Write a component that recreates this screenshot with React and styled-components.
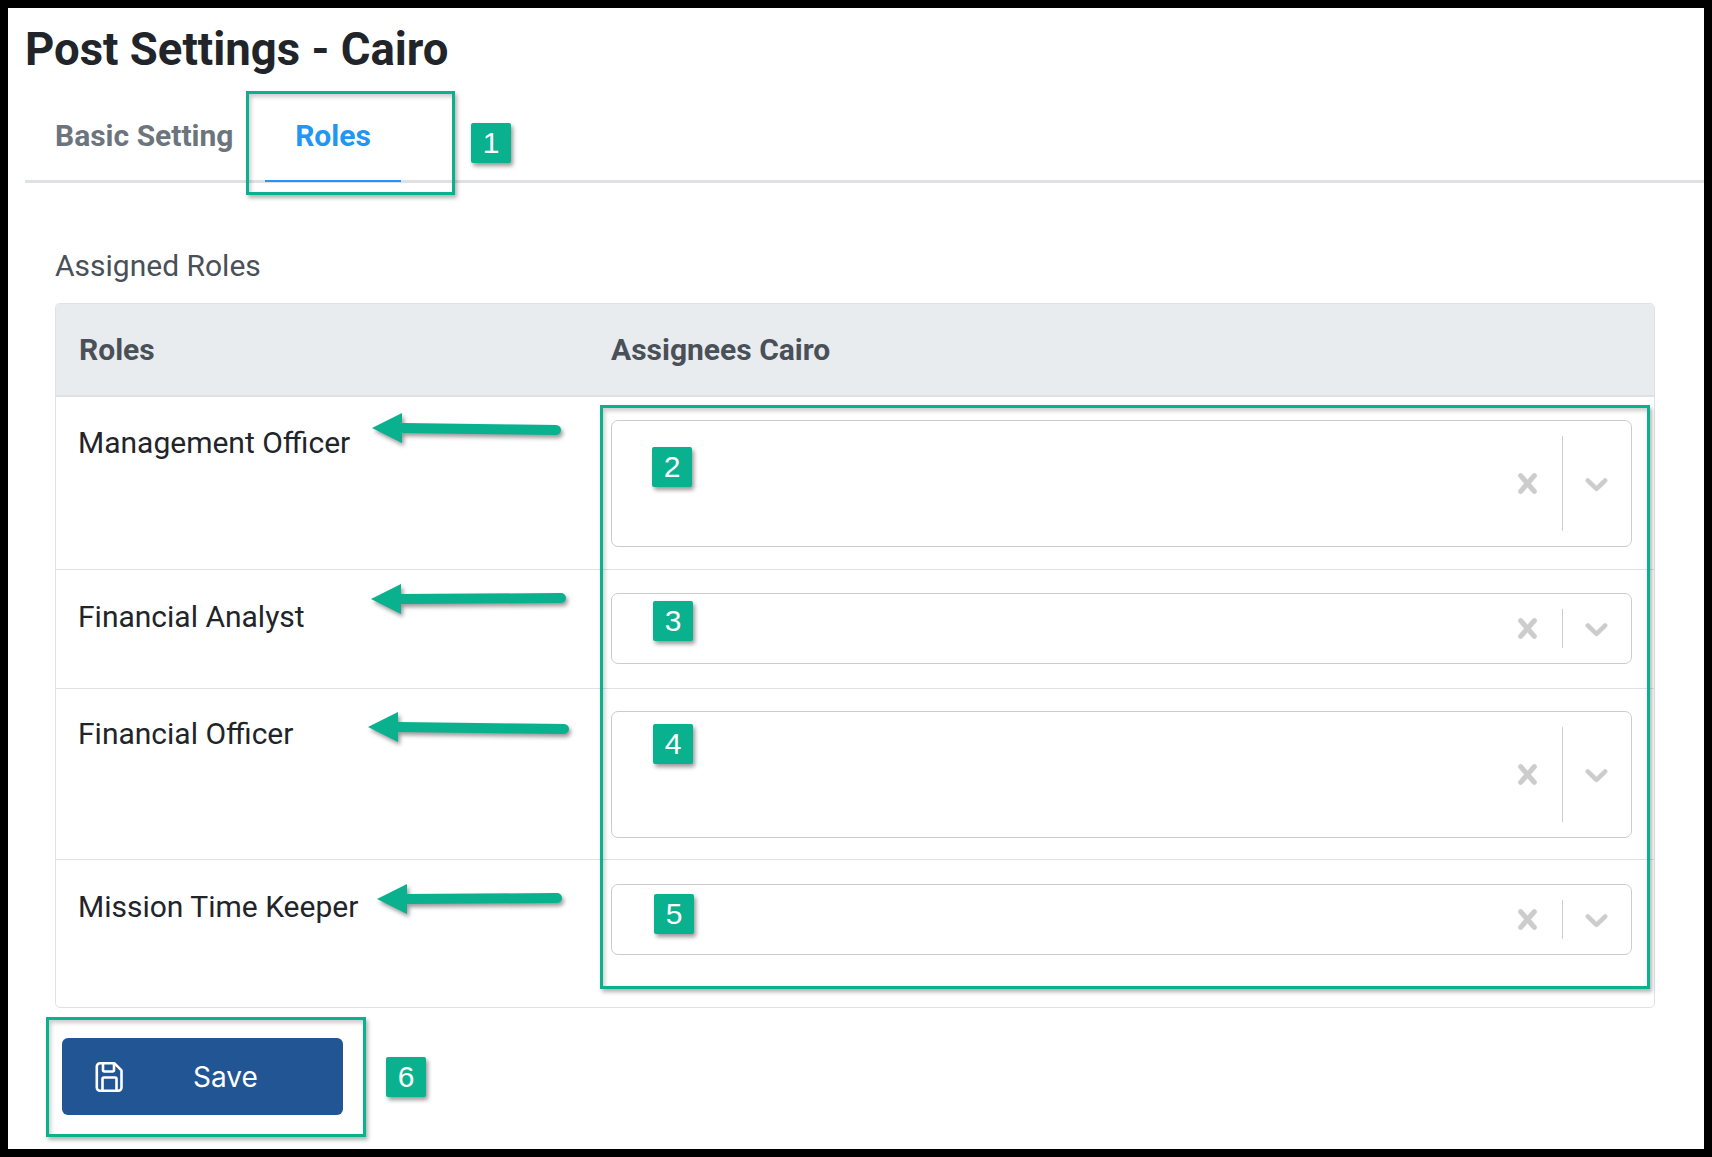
import React from "react";
import styled, { createGlobalStyle } from "styled-components";

const GlobalStyle = createGlobalStyle`
  * {
    box-sizing: border-box;
  }
  html, body {
    margin: 0;
    padding: 0;
    background: #fff;
    font-family: Roboto, "Liberation Sans", sans-serif;
  }
`;

const Frame = styled.div`
  position: relative;
  width: 1712px;
  height: 1157px;
  border: 8px solid #000;
  background: #fff;
  overflow: hidden;
`;

const Page = styled.div`
  padding: 17px 0 0 17px;
`;

const Title = styled.h1`
  margin: 0;
  height: 59px;
  font-size: 45.5px;
  line-height: 50px;
  font-weight: 700;
  color: #212529;
`;

const Tabs = styled.div`
  display: flex;
  height: 99px;
  border-bottom: 3px solid #dee2e6;
`;

const Tab = styled.div`
  height: 98px;
  width: ${(p) => p.$width}px;
  margin-left: ${(p) => p.$left}px;
  padding-top: 32px;
  font-size: 30px;
  line-height: 40px;
  font-weight: 700;
  text-align: ${(p) => (p.$active ? "center" : "left")};
  color: ${(p) => (p.$active ? "#2196f3" : "#6c757d")};
  border-bottom: 2px solid ${(p) => (p.$active ? "#2196f3" : "transparent")};
`;

const Section = styled.div`
  padding: 0 49px 0 30px;
`;

const SectionLabel = styled.div`
  margin-top: 63px;
  height: 57px;
  font-size: 30px;
  line-height: 40px;
  color: #495057;
`;

const Table = styled.div`
  border: 1px solid #dee2e6;
  border-radius: 5px;
  overflow: hidden;
`;

const HeaderRow = styled.div`
  display: grid;
  grid-template-columns: 555px 1fr;
  height: 93px;
  background: #e9ecef;
  border-bottom: 2px solid #dee2e6;
  font-size: 30px;
  line-height: 92px;
  font-weight: 700;
  color: #495057;
`;

const HeaderCell = styled.div`
  padding-left: ${(p) => p.$pad}px;
`;

const Row = styled.div`
  display: grid;
  grid-template-columns: 555px 1fr;
  align-items: start;
  height: ${(p) => p.$height}px;
  border-bottom: ${(p) => (p.$last ? "0" : "1px solid #dee2e6")};
`;

const RoleName = styled.div`
  margin-top: ${(p) => p.$top}px;
  padding-left: 22px;
  font-size: 30px;
  line-height: 40px;
  color: #212529;
`;

const Select = styled.div`
  display: flex;
  align-items: center;
  justify-content: flex-end;
  width: 1021px;
  height: ${(p) => p.$height}px;
  margin-top: ${(p) => p.$top}px;
  border: 1px solid #ccc;
  border-radius: 7px;
  background: #fff;
`;

const Indicator = styled.div`
  display: flex;
  padding: 0 ${(p) => p.$right}px 0 15px;
  color: #ccc;
`;

const Separator = styled.span`
  align-self: stretch;
  width: 1px;
  margin: 15px 0;
  background: #ccc;
`;

const SaveButton = styled.button`
  display: flex;
  align-items: center;
  width: 281px;
  height: 77px;
  margin: 30px 0 0 7px;
  padding: 0 0 0 33px;
  border: 0;
  border-radius: 6px;
  background: #225594;
  color: #fff;
  font-family: Inter, Roboto, sans-serif;
  font-size: 28px;
`;

const SaveLabel = styled.span`
  margin-left: 69px;
`;

const Outline = styled.div`
  position: absolute;
  left: ${(p) => p.$x - 8}px;
  top: ${(p) => p.$y - 8}px;
  width: ${(p) => p.$w}px;
  height: ${(p) => p.$h}px;
  border: 3px solid #09b18e;
  box-shadow: 2px 3px 4px rgba(0, 0, 0, 0.3), inset 2px 3px 4px rgba(0, 0, 0, 0.2);
  pointer-events: none;
`;

const Badge = styled.div`
  position: absolute;
  left: ${(p) => p.$x - 8}px;
  top: ${(p) => p.$y - 8}px;
  width: 40px;
  height: 40px;
  display: flex;
  align-items: center;
  justify-content: center;
  border-radius: 2px;
  background: #09b18e;
  color: #fff;
  font-family: "Liberation Sans", Arial, sans-serif;
  font-size: 30px;
  box-shadow: 2px 3px 4px rgba(0, 0, 0, 0.4);
`;

const ArrowSvg = styled.svg`
  position: absolute;
  left: ${(p) => p.$x - 8}px;
  top: ${(p) => p.$y - 8}px;
  overflow: visible;
  filter: drop-shadow(2px 3px 2px rgba(0, 0, 0, 0.4));
`;

const ClearIcon = () => (
  <svg width="39" height="39" viewBox="0 0 20 20" fill="currentColor" stroke="currentColor" strokeWidth="0.3">
    <path d="M14.348 14.849c-0.469 0.469-1.229 0.469-1.697 0l-2.651-3.030-2.651 3.029c-0.469 0.469-1.229 0.469-1.697 0-0.469-0.469-0.469-1.229 0-1.697l2.758-3.15-2.759-3.152c-0.469-0.469-0.469-1.228 0-1.697s1.228-0.469 1.697 0l2.652 3.031 2.651-3.031c0.469-0.469 1.228-0.469 1.697 0s0.469 1.229 0 1.697l-2.758 3.152 2.758 3.15c0.469 0.469 0.469 1.229 0 1.698z" />
  </svg>
);

const ChevronIcon = () => (
  <svg width="37" height="37" viewBox="0 0 20 20" fill="currentColor" stroke="currentColor" strokeWidth="0.3">
    <path d="M4.516 7.548c0.436-0.446 1.043-0.481 1.576 0l3.908 3.747 3.908-3.747c0.533-0.481 1.141-0.446 1.576 0 0.436 0.445 0.408 1.197 0 1.615-0.406 0.418-4.695 4.502-4.695 4.502-0.217 0.223-0.502 0.335-0.789 0.335s-0.572-0.112-0.79-0.335c0 0-4.287-4.084-4.695-4.502s-0.436-1.17 0-1.615z" />
  </svg>
);

const FloppyIcon = () => (
  <svg width="29" height="32" viewBox="0 0 29 32" fill="none" stroke="#fff" strokeWidth="2.6" strokeLinejoin="round">
    <path d="M5 2.3h14.5l7 7V26.5a3.2 3.2 0 0 1-3.2 3.2H5a3.2 3.2 0 0 1-3.2-3.2V5.5A3.2 3.2 0 0 1 5 2.3z" />
    <path d="M8 2.5v6.6a1.4 1.4 0 0 0 1.4 1.4h8.2a1.4 1.4 0 0 0 1.4-1.4V2.5" />
    <path d="M7.5 29.5V17.8a1.3 1.3 0 0 1 1.3-1.3h11.4a1.3 1.3 0 0 1 1.3 1.3v11.7" />
  </svg>
);

// tip and tail are page coordinates of the arrow's point and its rounded end
const Arrow = ({ tip, tail }) => {
  const dx = tail[0] - tip[0];
  const dy = tail[1] - tip[1];
  return (
    <ArrowSvg $x={tip[0]} $y={tip[1]} width="1" height="1">
      <path d={`M30 0 L${dx} ${dy}`} stroke="#09b18e" strokeWidth="10" strokeLinecap="round" fill="none" />
      <path d="M0 0 L30 -15 L30 15 Z" fill="#09b18e" />
    </ArrowSvg>
  );
};

const rows = [
  { name: "Management Officer", height: 173, top: 23, nameTop: 26, select: 127 },
  { name: "Financial Analyst", height: 119, top: 23, nameTop: 27, select: 71 },
  { name: "Financial Officer", height: 171, top: 22, nameTop: 25, select: 127 },
  { name: "Mission Time Keeper", height: 147, top: 24, nameTop: 27, select: 71, last: true },
];

const badges = [
  { n: 1, x: 471, y: 123 },
  { n: 2, x: 652, y: 447 },
  { n: 3, x: 653, y: 601 },
  { n: 4, x: 653, y: 724 },
  { n: 5, x: 654, y: 894 },
  { n: 6, x: 386, y: 1057 },
];

const arrows = [
  { tip: [372, 428], tail: [556, 430] },
  { tip: [371, 599], tail: [561, 598] },
  { tip: [368, 727], tail: [564, 729] },
  { tip: [377, 899], tail: [557, 898] },
];

const App = () => {
  return (
    <Frame>
      <GlobalStyle />
      <Page>
        <Title>Post Settings - Cairo</Title>
        <Tabs>
          <Tab $width={210} $left={30}>Basic Setting</Tab>
          <Tab $width={136} $left={0} $active>Roles</Tab>
        </Tabs>
        <Section>
          <SectionLabel>Assigned Roles</SectionLabel>
          <Table>
            <HeaderRow>
              <HeaderCell $pad={23}>Roles</HeaderCell>
              <HeaderCell $pad={0}>Assignees Cairo</HeaderCell>
            </HeaderRow>
            {rows.map((row) => (
              <Row key={row.name} $height={row.height} $last={row.last}>
                <RoleName $top={row.nameTop}>{row.name}</RoleName>
                <Select $height={row.select} $top={row.top}>
                  <Indicator $right={15}>
                    <ClearIcon />
                  </Indicator>
                  <Separator />
                  <Indicator $right={16}>
                    <ChevronIcon />
                  </Indicator>
                </Select>
              </Row>
            ))}
          </Table>
          <SaveButton>
            <FloppyIcon />
            <SaveLabel>Save</SaveLabel>
          </SaveButton>
        </Section>
      </Page>

      <Outline $x={246} $y={91} $w={209} $h={104} />
      <Outline $x={600} $y={405} $w={1050} $h={584} />
      <Outline $x={46} $y={1017} $w={320} $h={120} />
      {arrows.map((a) => (
        <Arrow key={a.tip[1]} tip={a.tip} tail={a.tail} />
      ))}
      {badges.map((b) => (
        <Badge key={b.n} $x={b.x} $y={b.y}>{b.n}</Badge>
      ))}
    </Frame>
  );
};

export default App;
